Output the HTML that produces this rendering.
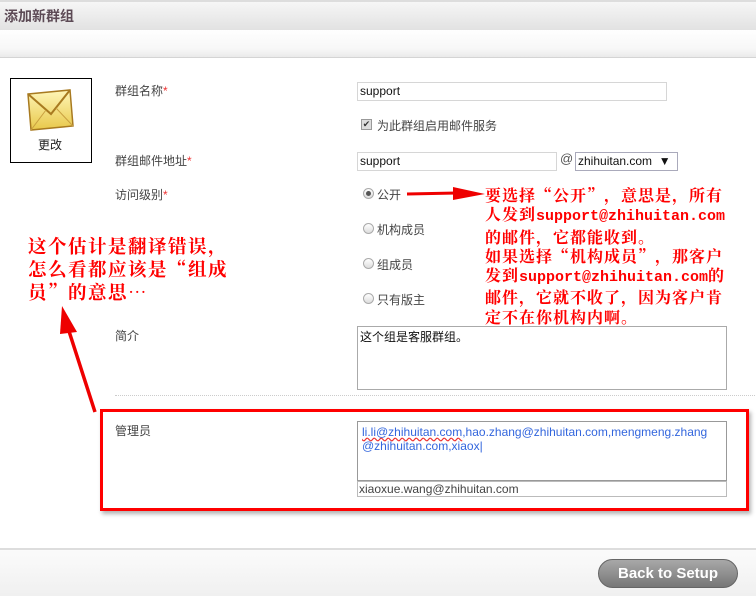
<!DOCTYPE html>
<html><head><meta charset="utf-8"><style>
*{margin:0;padding:0;box-sizing:border-box}
body{width:756px;height:596px;position:relative;background:#fff;font-family:"Liberation Sans","Noto Sans CJK SC",sans-serif;font-size:12px;color:#333;overflow:hidden}
.a{position:absolute}
.lbl{position:absolute;left:115px;font-size:12px;color:#444}
.req{color:#e33}
.inp{position:absolute;border:1px solid #d6d6d6;background:#fff;font-size:12px;padding:1px 2px;color:#111}
.rad{position:absolute;width:11px;height:11px;border-radius:50%;border:1px solid #aaa;background:linear-gradient(#fff,#ddd)}
.rt{position:absolute;font-size:12px;color:#444}
.red{position:absolute;color:#f00;font-family:"Noto Serif CJK SC",serif;font-weight:bold;white-space:nowrap}
.m{font-family:"Liberation Mono",monospace;letter-spacing:0;font-weight:bold;font-size:15px}
</style></head><body>
<div class="a" style="left:0;top:0;width:756px;height:30px;background:linear-gradient(#f6f6f6,#e2e2e2);border-top:2px solid #ddd"></div>
<div class="a" style="left:4px;top:6px;font-size:14px;font-weight:bold;color:#5c4a55">添加新群组</div>
<div class="a" style="left:0;top:30px;width:756px;height:28px;background:linear-gradient(#fff,#f7f7f7 70%,#eaeaea);border-bottom:1px solid #d4d4d4"></div>

<div class="a" style="left:10px;top:78px;width:82px;height:85px;border:1px solid #000"></div>
<svg class="a" style="left:26px;top:88px" width="50" height="44" viewBox="0 0 50 44">
<defs><linearGradient id="g" x1="0" y1="0" x2="0" y2="1"><stop offset="0" stop-color="#fff6b8"/><stop offset="1" stop-color="#e8c84a"/></linearGradient></defs>
<path d="M2 6 L44 2 L47 38 L5 42 Z" fill="url(#g)" stroke="#a87a20" stroke-width="1.5"/>
<path d="M2 6 L25 26 L44 2" fill="none" stroke="#a87a20" stroke-width="2"/>
<path d="M5 42 L20 22 M47 38 L30 20" stroke="#c9a040" stroke-width="1"/>
</svg>
<div class="a" style="left:38px;top:136px;font-size:12px;color:#222">更改</div>

<div class="lbl" style="top:82px">群组名称<span class="req">*</span></div>
<div class="inp" style="left:357px;top:82px;width:310px;height:19px">support</div>
<div class="a" style="left:361px;top:119px;width:11px;height:11px;border:1px solid #999;background:#ddd;font-size:9px;line-height:9px;text-align:center">✔</div>
<div class="rt" style="left:377px;top:117px">为此群组启用邮件服务</div>

<div class="lbl" style="top:152px">群组邮件地址<span class="req">*</span></div>
<div class="inp" style="left:357px;top:152px;width:200px;height:19px">support</div>
<div class="a" style="left:560px;top:151px;font-size:13px;color:#555">@</div>
<div class="inp" style="left:575px;top:152px;width:103px;height:19px;border-color:#aab">zhihuitan.com &nbsp;▼</div>

<div class="lbl" style="top:186px">访问级别<span class="req">*</span></div>
<div class="rad" style="left:363px;top:188px"><div style="width:5px;height:5px;border-radius:50%;background:#555;margin:2px"></div></div>
<div class="rt" style="left:377px;top:186px">公开</div>
<div class="rad" style="left:363px;top:223px"></div><div class="rt" style="left:377px;top:221px">机构成员</div>
<div class="rad" style="left:363px;top:258px"></div><div class="rt" style="left:377px;top:256px">组成员</div>
<div class="rad" style="left:363px;top:293px"></div><div class="rt" style="left:377px;top:291px">只有版主</div>

<svg class="a" style="left:405px;top:186px" width="80" height="16"><path d="M2 8 L52 7" stroke="#e00" stroke-width="3"/><path d="M48 1 L80 8 L48 14 Z" fill="#e00"/></svg>
<div class="red" style="left:485px;top:185px;font-size:16px;letter-spacing:1px;line-height:19.3px">要选择“公开”，意思是，所有<br>人发到<span class="m">support@zhihuitan.com</span><br>的邮件，它都能收到。<br>如果选择“机构成员”，那客户<br>发到<span class="m">support@zhihuitan.com</span>的<br>邮件，它就不收了，因为客户肯<br>定不在你机构内啊。</div>

<div class="red" style="left:28px;top:235px;font-size:18.5px;letter-spacing:1.5px;line-height:23px">这个估计是翻译错误，<br>怎么看都应该是“组成<br>员”的意思…</div>
<svg class="a" style="left:55px;top:300px" width="50" height="115"><path d="M40 112 L12 25" stroke="#e00" stroke-width="3.5"/><path d="M7 6 L22 32 L5 34 Z" fill="#e00"/></svg>

<div class="lbl" style="top:327px">简介</div>
<div class="inp" style="left:357px;top:326px;width:370px;height:64px;border-color:#aaa">这个组是客服群组。</div>
<div class="a" style="left:115px;top:395px;width:640px;border-top:1px dotted #ccc"></div>

<div class="a" style="left:100px;top:409px;width:649px;height:102px;border:3px solid #f00;box-shadow:2px 3px 4px rgba(0,0,0,.3)"></div>
<div class="lbl" style="top:422px">管理员</div>
<div class="inp" style="left:357px;top:421px;width:370px;height:60px;border-color:#999;color:#3366dd;line-height:14px;padding:3px 4px"><span style="text-decoration:underline wavy #e33">li.li@zhihuitan.com</span>,hao.zhang@zhihuitan.com,mengmeng.zhang<br>@zhihuitan.com,xiaox|</div>
<div class="inp" style="left:357px;top:481px;width:370px;height:16px;border-color:#bbb;padding:0 1px;line-height:14px;color:#444">xiaoxue.wang@zhihuitan.com</div>

<div class="a" style="left:0;top:548px;width:756px;height:48px;background:linear-gradient(#fbfbfb,#f0f0f0);border-top:2px solid #ddd"></div>
<div class="a" style="left:598px;top:559px;width:140px;height:29px;border-radius:15px;background:linear-gradient(#a8a8a8,#777);border:1px solid #666;color:#fff;font-weight:bold;font-size:15px;line-height:27px;text-align:center">Back to Setup</div>
</body></html>
